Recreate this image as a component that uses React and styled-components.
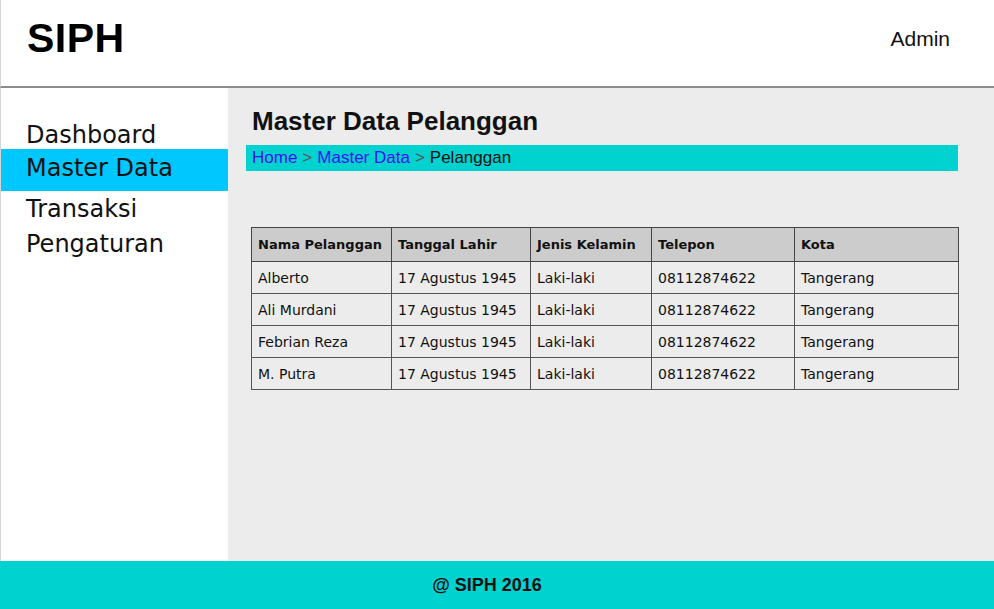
import React from "react";
import styled, { createGlobalStyle } from "styled-components";

const GlobalStyle = createGlobalStyle`
  *, *::before, *::after {
    box-sizing: border-box;
  }
  html, body {
    margin: 0;
    padding: 0;
  }
  body {
    font-family: "Liberation Sans", Arial, sans-serif;
    background: #ffffff;
  }
`;

const Page = styled.div`
  width: 994px;
  height: 609px;
  display: grid;
  grid-template-rows: 88px minmax(0, 1fr) 48px;
  grid-template-columns: minmax(0, 1fr);
  overflow: hidden;
`;

const Header = styled.header`
  display: flex;
  align-items: center;
  justify-content: space-between;
  padding: 0 44px 10px 26px;
  border-left: 1px solid #d6d6d6;
  border-bottom: 2px solid #8c8c8c;
  background: #fff;
`;

const Brand = styled.h1`
  margin: 0;
  font-size: 41px;
  font-weight: 700;
  letter-spacing: 0.5px;
  color: #000;
`;

const User = styled.span`
  font-size: 21px;
  color: #111;
  margin-top: 2px;
`;

const Body = styled.div`
  display: grid;
  grid-template-columns: 228px minmax(0, 1fr);
  min-height: 0;
`;

const Sidebar = styled.nav`
  background: #fff;
  border-left: 1px solid #d6d6d6;
  padding-top: 26px;
  display: flex;
  flex-direction: column;
`;

const NavItem = styled.a`
  display: block;
  font-family: "DejaVu Sans", Verdana, sans-serif;
  font-size: 24px;
  color: #111;
  padding: 0 0 0 25px;
  height: ${(p) => (p.$active ? "42px" : "35px")};
  line-height: ${(p) => (p.$active ? "38px" : p.$first ? "42px" : "37px")};
  background: ${(p) => (p.$active ? "#00c8ff" : "transparent")};
`;

const Main = styled.main`
  background: #ececec;
  padding: 18px 36px 0 18px;
`;

const Title = styled.h2`
  margin: 0 0 9px 6px;
  font-size: 26px;
  font-weight: 700;
  color: #111;
  line-height: 30px;
`;

const Breadcrumb = styled.div`
  background: #00d2d0;
  height: 26px;
  display: flex;
  align-items: center;
  padding-left: 6px;
  font-size: 17px;
  gap: 5px;
  color: #555;
`;

const Crumb = styled.span`
  color: ${(p) => (p.$current ? "#111" : "#3a10f0")};
`;

const Table = styled.table`
  margin: 56px 0 0 5px;
  width: 707px;
  table-layout: fixed;
  border-collapse: collapse;
  font-family: "Comic Sans MS", "DejaVu Sans", sans-serif;
  font-size: 14px;
  color: #111;
  border: 1.5px solid #333;
`;

const Th = styled.th`
  background: #cccccc;
  text-align: left;
  font-size: 13px;
  font-weight: 700;
  height: 34px;
  padding: 0 6px;
  border: 1.5px solid #444;
  width: ${(p) => p.$w}px;
  white-space: nowrap;
  overflow: hidden;
`;

const Td = styled.td`
  height: 32px;
  padding: 0 6px;
  border: 1.5px solid #555;
  white-space: nowrap;
  overflow: hidden;
`;

const Footer = styled.footer`
  background: #00d2d0;
  display: flex;
  align-items: center;
  justify-content: center;
  font-size: 18px;
  font-weight: 700;
  color: #111;
  padding-right: 20px;
`;

const columns = [
  { label: "Nama Pelanggan", w: 140 },
  { label: "Tanggal Lahir", w: 139 },
  { label: "Jenis Kelamin", w: 121 },
  { label: "Telepon", w: 143 },
  { label: "Kota", w: 164 },
];

const rows = ["Alberto", "Ali Murdani", "Febrian Reza", "M. Putra"].map((name) => [
  name,
  "17 Agustus 1945",
  "Laki-laki",
  "08112874622",
  "Tangerang",
]);

export default function App() {
  return (
    <>
      <GlobalStyle />
      <Page>
        <Header>
          <Brand>SIPH</Brand>
          <User>Admin</User>
        </Header>
        <Body>
          <Sidebar>
            <NavItem $first>Dashboard</NavItem>
            <NavItem $active>Master Data</NavItem>
            <NavItem>Transaksi</NavItem>
            <NavItem>Pengaturan</NavItem>
          </Sidebar>
          <Main>
            <Title>Master Data Pelanggan</Title>
            <Breadcrumb>
              <Crumb>Home</Crumb>
              <span>&gt;</span>
              <Crumb>Master Data</Crumb>
              <span>&gt;</span>
              <Crumb $current>Pelanggan</Crumb>
            </Breadcrumb>
            <Table>
              <thead>
                <tr>
                  {columns.map((c) => (
                    <Th key={c.label} $w={c.w}>
                      {c.label}
                    </Th>
                  ))}
                </tr>
              </thead>
              <tbody>
                {rows.map((r) => (
                  <tr key={r[0]}>
                    {r.map((cell, i) => (
                      <Td key={i}>{cell}</Td>
                    ))}
                  </tr>
                ))}
              </tbody>
            </Table>
          </Main>
        </Body>
        <Footer>@ SIPH 2016</Footer>
      </Page>
    </>
  );
}
